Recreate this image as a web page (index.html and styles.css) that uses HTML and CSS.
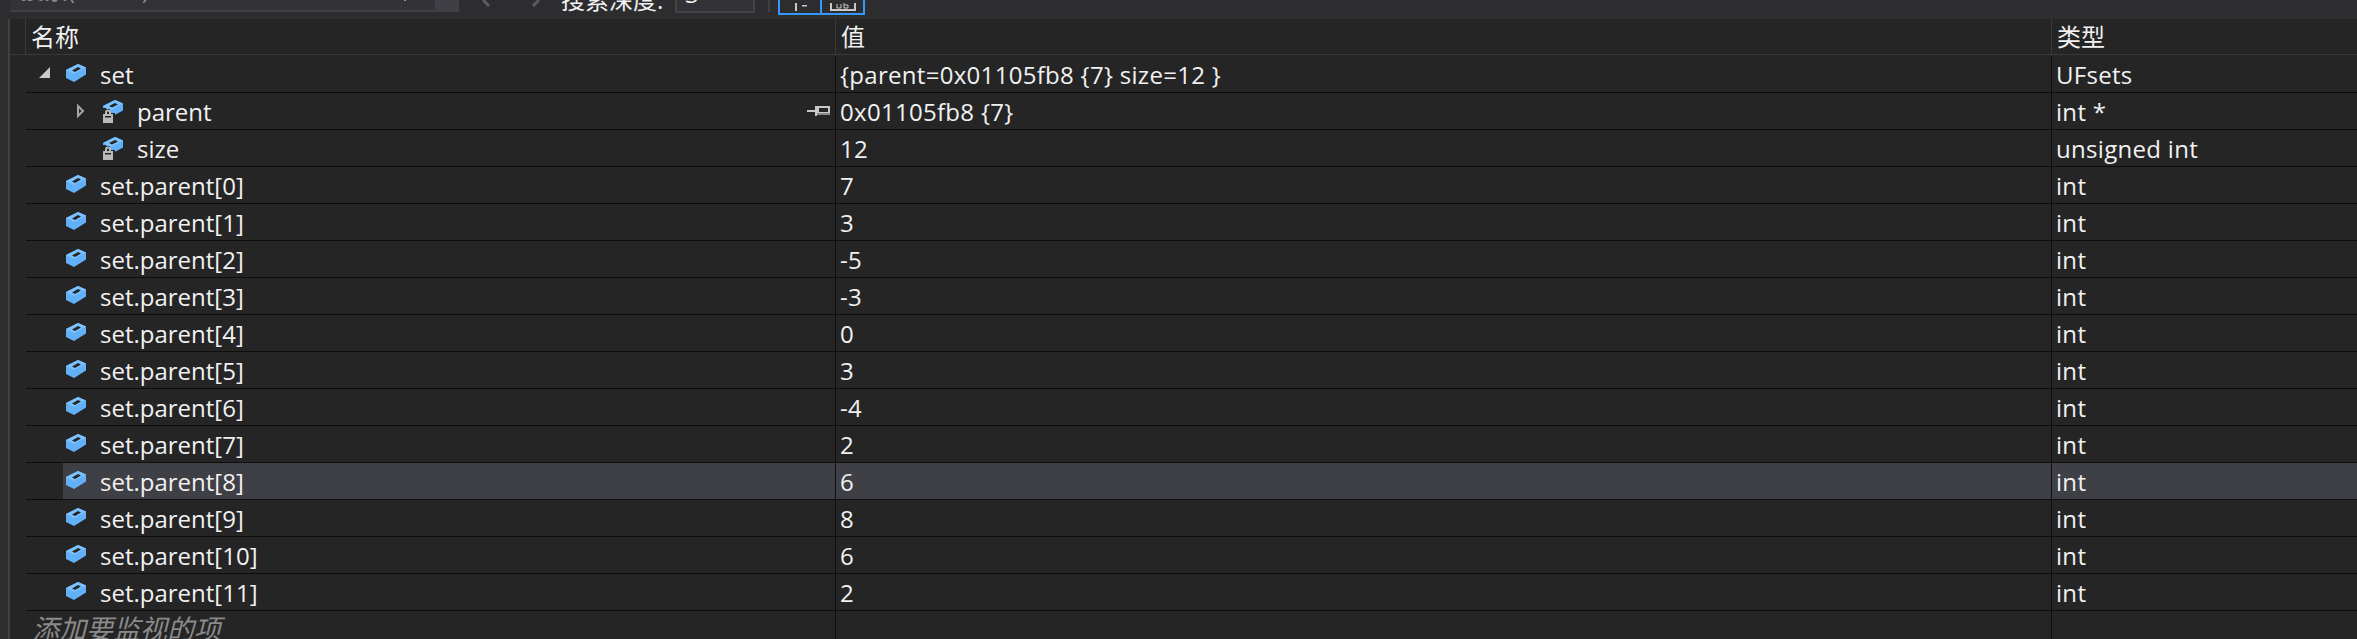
FILE: index.html
```html
<!DOCTYPE html>
<html lang="zh-CN">
<head>
<meta charset="utf-8">
<title>监视 1</title>
<link rel="stylesheet" href="styles.css">
</head>
<body>
<svg class="defs" width="0" height="0" aria-hidden="true">
  <symbol id="cube" viewBox="0 0 20 18">
    <path fill="#62b0f8" d="M0 6 12 0 20 3.500 20 10.500 8 18 0 14Z"/>
    <path fill="#7cc2ff" d="M0 6 12 0 20 3.500 8 10Z"/>
    <path fill="#252526" d="M6 6.500 12 3 15 4.500 9 8Z"/>
  </symbol>
  <symbol id="cube-lock" viewBox="0 0 20 23">
    <path fill="#62b0f8" d="M0 6 12 0 20 3.500 20 10.500 8 17 0 13Z"/>
    <path fill="#7cc2ff" d="M0 6 12 0 20 3.500 8 10Z"/>
    <path fill="#252526" d="M6 6 12 3 15 4.500 9 7.500Z"/>
    <path fill="#252526" d="M0 8H3V9H7V13H12V23H0Z"/>
    <path fill="none" stroke="#b9b9b9" stroke-width="2" d="M3 14V12.500A2 2 0 0 1 7 12.500V14"/>
    <path fill="#b9b9b9" d="M0 14H10V23H0Z"/>
    <path fill="#252526" d="M2 16H8V17.500H2Z"/>
  </symbol>
</svg>

<div class="toolbar">
  <div class="search">
    <span class="search-text">搜索(Ctrl+E)</span>
    <svg class="search-arrow" width="10" height="5" viewBox="0 0 10 5"><path fill="#f1f1f1" d="M0 0H10L5 5Z"/></svg>
    <span class="search-btn"></span>
  </div>
  <div class="nav">
    <svg class="nav-arrow" width="10" height="8" viewBox="0 0 10 8"><path fill="none" stroke="#5c5c5e" stroke-width="3" d="M2 0 8 6"/></svg>
    <svg class="nav-arrow" width="10" height="8" viewBox="0 0 10 8"><path fill="none" stroke="#5c5c5e" stroke-width="3" d="M8 0 2 6"/></svg>
  </div>
  <span class="depth-label">搜索深度:</span>
  <span class="depth-input">3</span>
  <span class="tool-sep"></span>
  <span class="tool-btn first"><svg width="24" height="10" viewBox="0 0 24 10"><path fill="#c8c8c8" d="M7 0H9V8H7ZM14 2H19V3.500H14Z"/></svg></span>
  <span class="tool-btn"><svg width="28" height="10" viewBox="0 0 28 10"><path fill="none" stroke="#c8c8c8" stroke-width="2" d="M2 0V7H26V0"/><path fill="none" stroke="#c8c8c8" stroke-width="1" d="M8 1V5H12V1M15 0V5H19V2H15"/></svg></span>
</div>

<main class="watch">
  <div class="head">
    <div class="head-name">名称</div>
    <div class="head-cell">值</div>
    <div class="head-cell">类型</div>
  </div>

  <div class="row">
    <div class="name"><span class="exp"><svg class="open" width="11" height="11" viewBox="0 0 11 11"><path fill="#c8c8c8" d="M11 0V11H0Z"/></svg></span><div class="label"><svg class="ico"><use href="#cube"/></svg><span>set</span></div></div>
    <div class="val">{parent=0x01105fb8 {7} size=12 }</div><div class="val">UFsets</div>
  </div>
  <div class="row">
    <div class="name lvl2"><span class="exp"><svg width="8" height="14" viewBox="0 0 8 14"><path fill="none" stroke="#a6a6a6" stroke-width="2" d="M1 2 6 7 1 12Z"/></svg></span><div class="label"><svg class="ico lock"><use href="#cube-lock"/></svg><span>parent</span>
      <svg class="pin" width="23" height="12" viewBox="0 0 23 12"><path fill="#c8c8c8" d="M0 5H10V7H0ZM8 1H10V11H8ZM10 1H23V10H10Z"/><path fill="#252526" d="M12 3H21V7H12Z"/><path fill="#8a8a8a" d="M10 8H23V10H10Z"/></svg></div></div>
    <div class="val">0x01105fb8 {7}</div><div class="val">int *</div>
  </div>
  <div class="row">
    <div class="name lvl2"><span class="exp"></span><div class="label"><svg class="ico lock"><use href="#cube-lock"/></svg><span>size</span></div></div>
    <div class="val">12</div><div class="val">unsigned int</div>
  </div>
  <div class="row">
    <div class="name"><span class="exp"></span><div class="label"><svg class="ico"><use href="#cube"/></svg><span>set.parent[0]</span></div></div>
    <div class="val">7</div><div class="val">int</div>
  </div>
  <div class="row">
    <div class="name"><span class="exp"></span><div class="label"><svg class="ico"><use href="#cube"/></svg><span>set.parent[1]</span></div></div>
    <div class="val">3</div><div class="val">int</div>
  </div>
  <div class="row">
    <div class="name"><span class="exp"></span><div class="label"><svg class="ico"><use href="#cube"/></svg><span>set.parent[2]</span></div></div>
    <div class="val">-5</div><div class="val">int</div>
  </div>
  <div class="row">
    <div class="name"><span class="exp"></span><div class="label"><svg class="ico"><use href="#cube"/></svg><span>set.parent[3]</span></div></div>
    <div class="val">-3</div><div class="val">int</div>
  </div>
  <div class="row">
    <div class="name"><span class="exp"></span><div class="label"><svg class="ico"><use href="#cube"/></svg><span>set.parent[4]</span></div></div>
    <div class="val">0</div><div class="val">int</div>
  </div>
  <div class="row">
    <div class="name"><span class="exp"></span><div class="label"><svg class="ico"><use href="#cube"/></svg><span>set.parent[5]</span></div></div>
    <div class="val">3</div><div class="val">int</div>
  </div>
  <div class="row">
    <div class="name"><span class="exp"></span><div class="label"><svg class="ico"><use href="#cube"/></svg><span>set.parent[6]</span></div></div>
    <div class="val">-4</div><div class="val">int</div>
  </div>
  <div class="row">
    <div class="name"><span class="exp"></span><div class="label"><svg class="ico"><use href="#cube"/></svg><span>set.parent[7]</span></div></div>
    <div class="val">2</div><div class="val">int</div>
  </div>
  <div class="row selected">
    <div class="name"><span class="exp"></span><div class="label"><svg class="ico"><use href="#cube"/></svg><span>set.parent[8]</span></div></div>
    <div class="val">6</div><div class="val">int</div>
  </div>
  <div class="row">
    <div class="name"><span class="exp"></span><div class="label"><svg class="ico"><use href="#cube"/></svg><span>set.parent[9]</span></div></div>
    <div class="val">8</div><div class="val">int</div>
  </div>
  <div class="row">
    <div class="name"><span class="exp"></span><div class="label"><svg class="ico"><use href="#cube"/></svg><span>set.parent[10]</span></div></div>
    <div class="val">6</div><div class="val">int</div>
  </div>
  <div class="row">
    <div class="name"><span class="exp"></span><div class="label"><svg class="ico"><use href="#cube"/></svg><span>set.parent[11]</span></div></div>
    <div class="val">2</div><div class="val">int</div>
  </div>
  <div class="row add">
    <div class="name add-name">添加要监视的项</div>
    <div class="val"></div><div class="val"></div>
  </div>
</main>
</body>
</html>
```

FILE: styles.css
```css
* { box-sizing: border-box; }
html, body { margin: 0; height: 639px; overflow: hidden; }
body {
  background: #2d2d30;
  color: #f1f1f1;
  font-family: "Open Sans", "Noto Sans CJK SC", sans-serif;
  font-size: 24px;
}
.defs { display: block; height: 0; }

.toolbar {
  display: flex;
  align-items: flex-end;
  height: 19px;
  overflow: hidden;
  padding-left: 10px;
}
.search {
  display: flex;
  align-items: flex-end;
  flex: none;
  width: 449px;
  height: 30px;
  margin-bottom: 7px;
  background: #333337;
  position: relative;
  padding-left: 10px;
  color: #8a8a8a;
  border-bottom: 2px solid #3f3f46;
}
.search-text { flex: 1; line-height: 28px; height: 28px; margin-bottom: 6px; white-space: nowrap; }
.search-arrow { position: absolute; right: 49px; bottom: 9px; }
.search-btn { width: 24px; height: 30px; background: #3f3f46; margin-bottom: -2px; flex: none; }
.nav { display: flex; gap: 40px; flex: none; margin: 0 0 11px 22px; width: 60px; }
.nav-arrow { flex: none; }
.depth-label { flex: none; margin-left: 20px; width: 90px; line-height: 30px; margin-bottom: 4px; white-space: nowrap; }
.depth-input {
  flex: none;
  width: 80px;
  height: 30px;
  margin: 0 0 6px 24px;
  padding-left: 8px;
  border: 2px solid #434346;
  background: #333337;
  line-height: 18px;
}
.tool-sep { flex: none; width: 2px; height: 20px; margin: 0 8px 7px 13px; background: #3f3f46; }
.tool-btn {
  flex: none;
  display: flex;
  align-items: flex-end;
  justify-content: center;
  width: 43px;
  height: 30px;
  margin-bottom: 4px;
  border: 2px solid #3399ff;
  border-left-width: 0;
}
.tool-btn.first { width: 44px; border-left-width: 2px; }

.watch { border-left: 2px solid #3f3f46; margin-left: 8px; height: 620px; background: #252526; }
.head {
  display: grid;
  grid-template-columns: 810px 1216px 1fr;
  height: 36px;
  margin-bottom: 1px;
  padding-left: 15px;
  border-bottom: 1px solid #3a3a3c;
  line-height: 36px;
}
.head-name, .head-cell { padding-left: 5px; border-left: 1px solid #3a3a3c; height: 35px; white-space: nowrap; }
.row {
  display: grid;
  grid-template-columns: 809px 1216px 1fr;
  grid-template-rows: 36px;
  height: 37px;
  margin-left: 16px;
  border-bottom: 1px solid #0e0e0e;
  line-height: 38px;
  white-space: nowrap;
}
.name { display: flex; align-items: stretch; min-width: 0; }
.exp { flex: none; width: 37px; display: flex; align-items: center; justify-content: flex-end; padding-right: 13px; }
.open { margin-bottom: 3px; }
.lvl2 .exp { width: 74px; padding-right: 15px; }
.label { flex: 1; min-width: 0; display: flex; align-items: center; position: relative; }
.label span { height: 36px; }
.ico { flex: none; width: 20px; height: 18px; margin: -2px 14px 0 3px; }
.ico.lock { height: 23px; margin: 0 14px 0 3px; }
.pin { position: absolute; right: 5px; top: 12px; }
.val { border-left: 1px solid #0e0e0e; padding-left: 4px; min-width: 0; letter-spacing: 0.3px; }
.selected .label, .selected .val { background: #3f3f46; }
.add { height: 28px; grid-template-rows: 28px; border-bottom: 0; overflow: hidden; }
.add-name {
  display: block;
  border-left: 1px solid #3a3a3c;
  margin-left: -1px;
  padding-left: 6px;
  color: #8a8a8a;
  font-style: italic;
  font-size: 27px;
  line-height: 36px;
}
```
